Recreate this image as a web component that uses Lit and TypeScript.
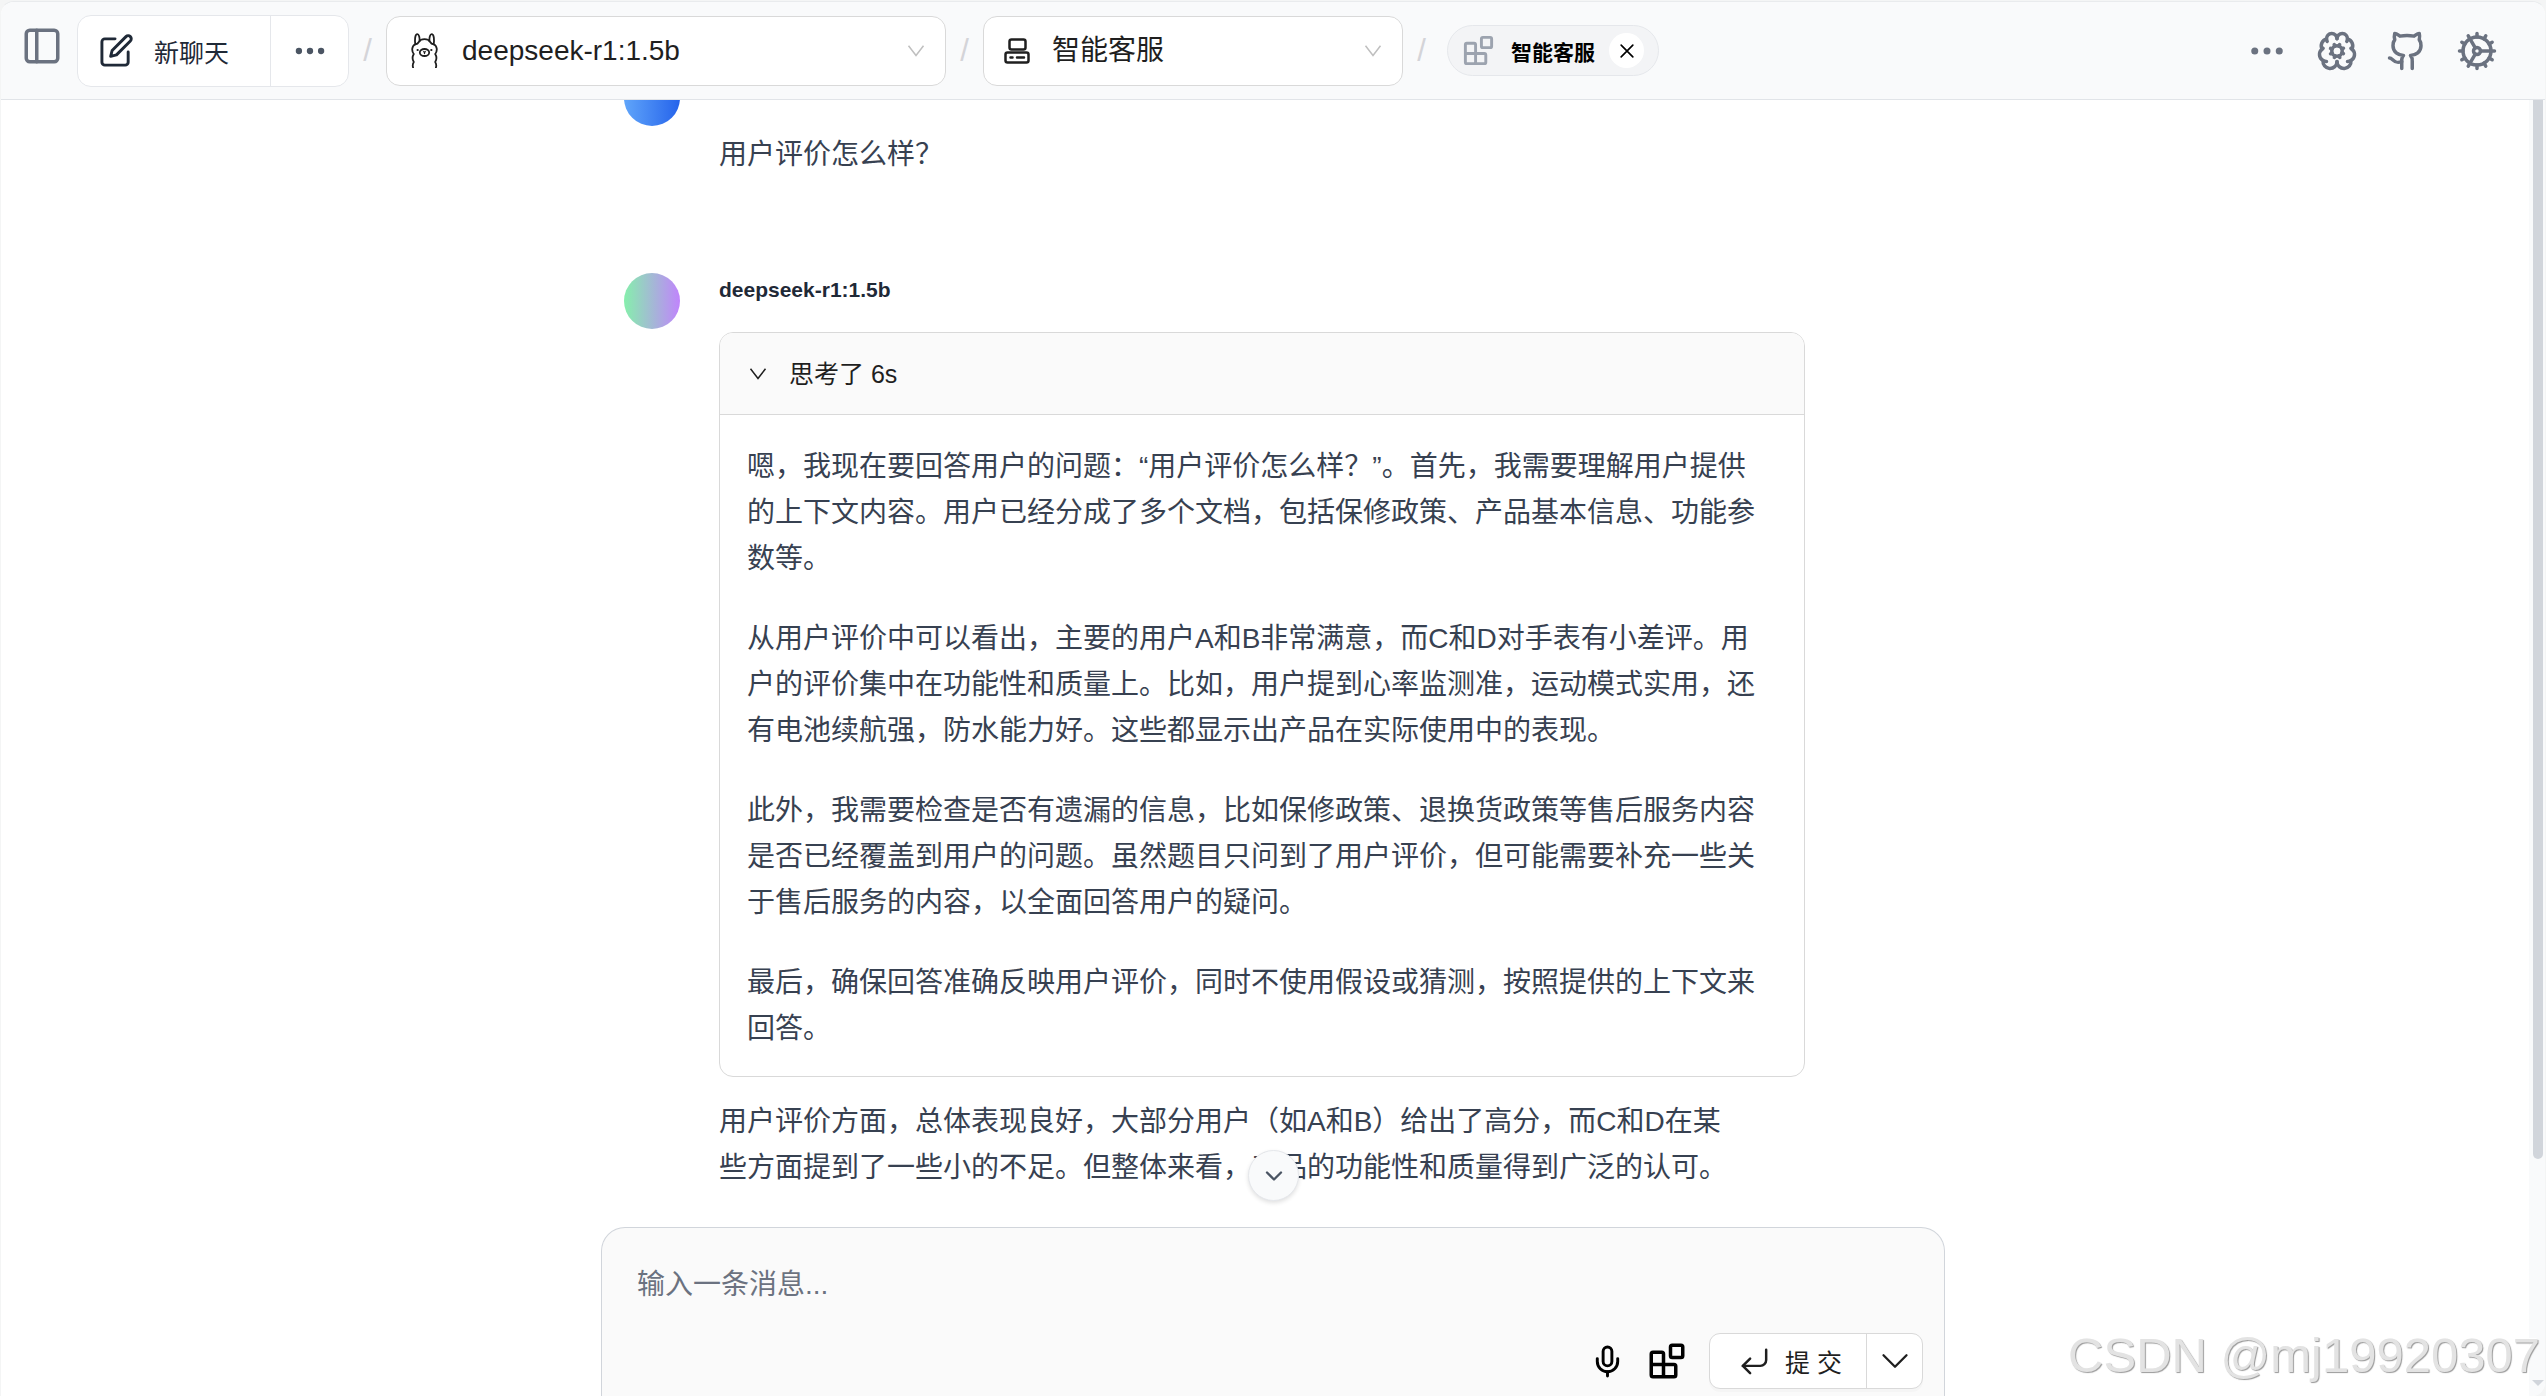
import { LitElement, html, css, svg } from "lit";
import { customElement, state } from "lit/decorators.js";

const icon = (cls: string, body: unknown, box = "0 0 24 24") =>
  html`<svg class="icon ${cls}" viewBox=${box} aria-hidden="true">${body}</svg>`;

const panelLeft = svg`<rect x="3" y="3" width="18" height="18" rx="2"/><path d="M9 3v18"/>`;
const squarePen = svg`<path d="M11 4H4a2 2 0 0 0-2 2v14a2 2 0 0 0 2 2h14a2 2 0 0 0 2-2v-7"/><path d="M18.5 2.5a2.12 2.12 0 0 1 3 3L12 15l-4 1 1-4Z"/>`;
const dots = svg`<circle cx="5" cy="12" r="2"/><circle cx="12" cy="12" r="2"/><circle cx="19" cy="12" r="2"/>`;
const chevron = svg`<path d="M2 5l10 13L22 5"/>`;
const chevronRound = svg`<path d="m6 9 6 6 6-6"/>`;
const close = svg`<path d="M5 5l14 14M19 5L5 19"/>`;
const blocks = svg`<rect x="14" y="3" width="7" height="7" rx="1"/><path d="M10 21V8a1 1 0 0 0-1-1H4a1 1 0 0 0-1 1v12a1 1 0 0 0 1 1h12a1 1 0 0 0 1-1v-5a1 1 0 0 0-1-1H3"/>`;
const mic = svg`<path d="M12 2a3 3 0 0 0-3 3v7a3 3 0 0 0 6 0V5a3 3 0 0 0-3-3Z"/><path d="M19 10v2a7 7 0 0 1-14 0v-2"/><path d="M12 19v3"/>`;
const enter = svg`<path d="m9 10-5 5 5 5"/><path d="M20 4v7a4 4 0 0 1-4 4H4"/>`;
const github = svg`<path d="M15 22v-4a4.8 4.8 0 0 0-1-3.5c3 0 6-2 6-5.5.08-1.25-.27-2.48-1-3.5.28-1.15.28-2.35 0-3.5 0 0-1 0-3 1.5-2.64-.5-5.36-.5-8 0C6 2 5 2 5 2c-.3 1.15-.3 2.35 0 3.5A5.403 5.403 0 0 0 4 9c0 3.5 3 5.5 6 5.5-.39.49-.68 1.05-.85 1.65-.17.6-.22 1.23-.15 1.85v4"/><path d="M9 18c-4.51 2-5-2-7-2"/>`;
const cog = svg`<path d="M12 20a8 8 0 1 0 0-16 8 8 0 0 0 0 16Z"/><path d="M12 14a2 2 0 1 0 0-4 2 2 0 0 0 0 4Z"/><path d="M12 2v2M12 22v-2M17 20.66l-1-1.73M11 10.27 7 3.34M20.66 17l-1.73-1M3.34 7l1.73 1M14 12h8M2 12h2M20.66 7l-1.73 1M3.34 17l1.73-1M17 3.34l-1 1.73M11 13.73l-4 6.93"/>`;
const brainCog = svg`<circle cx="12" cy="12" r="3"/>
  <path d="M12 5a3 3 0 1 0-5.997.125 4 4 0 0 0-2.526 5.77 4 4 0 0 0 .556 6.588A4 4 0 1 0 12 18"/>
  <path d="M12 5a3 3 0 1 1 5.997.125 4 4 0 0 1 2.526 5.77 4 4 0 0 1-.556 6.588A4 4 0 1 1 12 18"/>
  <path d="M6.003 5.125A3 3 0 0 0 6.401 6.5M17.599 6.5a3 3 0 0 0 .399-1.375M3.477 10.896a4 4 0 0 1 .585-.396M19.938 10.5a4 4 0 0 1 .585.396M6 18a4 4 0 0 1-1.967-.516M19.967 17.484A4 4 0 0 1 18 18"/>
  <path d="m15.7 10.4-.9.4M9.2 13.2l-.9.4M13.6 15.7l-.4-.9M10.8 9.2l-.4-.9M15.7 13.5l-.9-.4M9.2 10.9l-.9-.4M10.5 15.7l.4-.9M13.1 9.2l.4-.9"/>`;
const ollama = svg`<path d="M2.2 35c-.8-2.400-.6-4.200.6-6C1.300 26.500 1.200 23.500 2.800 21 .4 18 .6 13 4.300 11.300 6.500 11 7 10.500 7.800 9 9 7 11 6.200 13.500 6.200S18 7 19.200 9c.8 1.500 1.300 2 3.500 2.300 3.700 1.700 3.900 6.700 1.500 9.700 1.600 2.500 1.500 5.500 0 8 1.200 1.800 1.400 3.600.6 6"/>
  <path d="M4.300 11.300C3.600 7 4 1.500 6.100 1.200 8 1 8.800 4.500 8.600 7.800M22.700 11.300c.7-4.300.3-9.800-1.800-10.100C19 1 18.200 4.500 18.400 7.800"/>
  <ellipse cx="13.500" cy="19.500" rx="4.700" ry="3.500"/>
  <path d="M12.700 18.700l.8.600.8-.6M13.500 19.300v1.200" stroke-width="1.300"/>
  <path d="M6.600 17h.1M20.300 17h.1" stroke-width="2.200"/>`;
const assistant = svg`<rect x="5.500" y="1.500" width="16" height="10" rx="2"/><rect x="1.500" y="14.500" width="23" height="10" rx="2"/><path d="M6.500 19.500h2M13 19.500h7"/>`;

const THOUGHTS = [
  "嗯，我现在要回答用户的问题：“用户评价怎么样？”。首先，我需要理解用户提供的上下文内容。用户已经分成了多个文档，包括保修政策、产品基本信息、功能参数等。",
  "从用户评价中可以看出，主要的用户A和B非常满意，而C和D对手表有小差评。用户的评价集中在功能性和质量上。比如，用户提到心率监测准，运动模式实用，还有电池续航强，防水能力好。这些都显示出产品在实际使用中的表现。",
  "此外，我需要检查是否有遗漏的信息，比如保修政策、退换货政策等售后服务内容是否已经覆盖到用户的问题。虽然题目只问到了用户评价，但可能需要补充一些关于售后服务的内容，以全面回答用户的疑问。",
  "最后，确保回答准确反映用户评价，同时不使用假设或猜测，按照提供的上下文来回答。",
];
const ANSWER =
  "用户评价方面，总体表现良好，大部分用户（如A和B）给出了高分，而C和D在某些方面提到了一些小的不足。但整体来看，产品的功能性和质量得到广泛的认可。";

const base = css`
  * { box-sizing: border-box; }
  button, select, textarea { font: inherit; color: inherit; margin: 0; }
  button { padding: 0; border: 0; background: none; cursor: pointer; }
  .icon {
    display: block; flex: none; fill: none; stroke: currentColor;
    stroke-width: 2; stroke-linecap: round; stroke-linejoin: round;
  }
  .s42 { width: 42px; height: 42px; }
  .s35 { width: 35px; height: 35px; }
`;

@customElement("chat-header")
export class ChatHeader extends LitElement {
  static styles = [base, css`
    :host { display: block; flex: none; }
    .bar {
      display: flex; align-items: center; height: 98px; padding: 0 47px 0 20px;
      background: #f9fafb; border-bottom: 1px solid #e1e4e8; color: #6b7280;
    }
    .toggle { margin: 0 14px 10px 0; }
    .newchat {
      display: flex; height: 72px; border: 1px solid #e5e7eb; border-radius: 14px;
      background: #fff; color: #1f2937;
    }
    .new { display: flex; align-items: center; gap: 20px; padding: 0 41px 0 21px; font-size: 25px; }
    .more { width: 78px; border-left: 1px solid #e5e7eb; color: #4b5563; display: grid; place-items: center; }
    .filled { fill: currentColor; stroke: none; }
    .dots28 { width: 38px; height: 38px; }
    .slash { width: 37px; text-align: center; font-size: 31px; color: #d4d4d8; }
    .picker {
      display: flex; align-items: center; height: 70px; padding: 0 20px 0 24px;
      border: 1px solid #d9d9d9; border-radius: 14px; background: #fff; color: #1f1f1f; font-size: 28px;
    }
    .model { width: 560px; gap: 24px; }
    .bot { width: 420px; padding-left: 20px; gap: 22px; }
    .picker select { flex: 1; min-width: 0; appearance: none; border: 0; padding: 0; background: none; outline: none; }
    .ollama { width: 27px; height: 35px; stroke-width: 1.800; }
    .assistant { width: 26px; height: 26px; stroke-width: 2.500; }
    .arrow { width: 18px; height: 18px; color: #bfbfbf; stroke-linecap: butt; stroke-linejoin: miter; }
    .tag {
      display: flex; align-items: center; height: 51px; margin-left: 7px; padding: 0 14px 0 13px;
      border: 1px solid #e5e7eb; border-radius: 26px; background: #f3f4f6;
    }
    .tag .mark { color: #9ca3af; }
    .tag b { margin: 0 14px 0 15px; font-size: 21px; color: #000; }
    .close { width: 35px; height: 35px; border-radius: 50%; background: #fff; color: #000; display: grid; place-items: center; }
    .x { width: 20px; height: 20px; }
    .actions { display: flex; align-items: center; gap: 28px; margin-left: auto; }
    .actions a { color: inherit; }
  `];

  render() {
    return html`<header class="bar">
      <button class="toggle" aria-label="侧边栏">${icon("s42", panelLeft)}</button>
      <div class="newchat">
        <button class="new">${icon("s35", squarePen)}<span>新聊天</span></button>
        <button class="more" aria-label="更多">${icon("dots28 filled", dots)}</button>
      </div>
      <span class="slash">/</span>
      <label class="picker model">
        ${icon("ollama", ollama, "0 0 27 35")}
        <select aria-label="模型"><option>deepseek-r1:1.5b</option></select>
        ${icon("arrow", chevron)}
      </label>
      <span class="slash">/</span>
      <label class="picker bot">
        ${icon("assistant", assistant, "0 0 26 26")}
        <select aria-label="助手"><option>智能客服</option></select>
        ${icon("arrow", chevron)}
      </label>
      <span class="slash">/</span>
      <div class="tag">
        ${icon("s35 mark", blocks)}<b>智能客服</b>
        <button class="close" aria-label="移除">${icon("x", close)}</button>
      </div>
      <nav class="actions">
        <button aria-label="菜单">${icon("s42 filled", dots)}</button>
        <button aria-label="记忆">${icon("s42", brainCog)}</button>
        <a href="#github" aria-label="GitHub">${icon("s42", github)}</a>
        <a href="#settings" aria-label="设置">${icon("s42", cog)}</a>
      </nav>
    </header>`;
  }
}

@customElement("chat-messages")
export class ChatMessages extends LitElement {
  @state() private open = true;

  static styles = [base, css`
    :host {
      flex: 1; min-height: 0; display: flex; flex-direction: column; justify-content: flex-end;
      overflow: hidden; font-size: 28px; line-height: 46px; color: #374151;
    }
    .list {
      width: 100%; max-width: 1344px; margin: 0 auto; padding: 0 140px 36px 23px;
      display: flex; flex-direction: column; gap: 95px;
    }
    .message { display: grid; grid-template-columns: 56px minmax(0, 1fr); column-gap: 39px; }
    .avatar { width: 56px; height: 56px; border-radius: 50%; }
    .user .avatar { background: linear-gradient(to right, #60a5fa, #2563eb); }
    .reply .avatar { background: linear-gradient(to right, #86efac, #c084fc); }
    .user .body { padding-top: 62px; }
    p { margin: 0; max-width: 65ch; }
    .name { margin: 0 0 25px; font-size: 21px; line-height: 34px; color: #1f2937; }
    .thinking { border: 1px solid #d9d9d9; border-radius: 14px; overflow: hidden; margin-bottom: 22px; }
    .summary {
      display: flex; align-items: center; gap: 22px; width: 100%; height: 81px; padding: 0 29px;
      background: #fafafa; color: #1f1f1f; font-size: 25px; text-align: left;
    }
    .caret { width: 18px; height: 18px; stroke-linecap: butt; stroke-linejoin: miter; }
    .thoughts { display: grid; gap: 34px; padding: 29px 27px 24px; border-top: 1px solid #d9d9d9; }
  `];

  render() {
    return html`<div class="list">
      <article class="message user">
        <div class="avatar"></div>
        <div class="body"><p>用户评价怎么样？</p></div>
      </article>
      <article class="message reply">
        <div class="avatar"></div>
        <div>
          <h2 class="name">deepseek-r1:1.5b</h2>
          <section class="thinking">
            <button class="summary" aria-expanded=${this.open} @click=${() => (this.open = !this.open)}>
              ${icon("caret", chevron)}<span>思考了 6s</span>
            </button>
            ${this.open ? html`<div class="thoughts">${THOUGHTS.map((t) => html`<p>${t}</p>`)}</div>` : ""}
          </section>
          <p>${ANSWER}</p>
        </div>
      </article>
    </div>`;
  }
}

@customElement("chat-composer")
export class ChatComposer extends LitElement {
  static styles = [base, css`
    :host { display: block; flex: none; position: relative; width: 100%; max-width: 1344px; margin: 0 auto; }
    .down {
      position: absolute; bottom: calc(100% + 26px); left: calc(50% - 25px); width: 51px; height: 51px;
      display: grid; place-items: center; border: 1px solid #e5e7eb; border-radius: 50%;
      background: #f9fafb; color: #4b5563; box-shadow: 0 2px 4px rgba(0, 0, 0, 0.12);
    }
    .s28 { width: 28px; height: 28px; }
    .box {
      padding: 34px 21px 7px; border: 1px solid #d1d5db; border-bottom: 0;
      border-radius: 24px 24px 0 0; background: #fafafa;
    }
    textarea {
      display: block; width: 100%; height: 46px; padding: 0 14px; border: 0; outline: none; resize: none;
      overflow: hidden; background: none; font-size: 28px; line-height: 46px; color: #374151;
    }
    textarea::placeholder { color: #6b7280; opacity: 1; }
    .tools { display: flex; justify-content: flex-end; align-items: center; gap: 21px; margin-top: 25px; color: #000; }
    .submit {
      display: flex; height: 56px; border: 1px solid #d9d9d9; border-radius: 11px; background: #fff;
      color: #1f1f1f; box-shadow: 0 3px 0 rgba(0, 0, 0, 0.02);
    }
    .send { display: flex; align-items: center; gap: 13px; padding: 0 24px 0 27px; font-size: 25px; }
    .thin { stroke-width: 1.700; }
    .options { width: 56px; border-left: 1px solid #d9d9d9; display: grid; place-items: center; }
    .wide { width: 46px; height: 46px; stroke-width: 1.200; }
  `];

  render() {
    return html`
      <button class="down" aria-label="滚动到底部">${icon("s28", chevronRound)}</button>
      <form class="box" @submit=${(e: Event) => e.preventDefault()}>
        <textarea aria-label="消息" placeholder="输入一条消息..."></textarea>
        <div class="tools">
          <button type="button" aria-label="语音">${icon("s35", mic)}</button>
          <button type="button" aria-label="知识库">${icon("s42", blocks)}</button>
          <div class="submit">
            <button class="send">${icon("s35 thin", enter)}<span>提 交</span></button>
            <button class="options" type="button" aria-label="发送选项">${icon("wide", chevronRound)}</button>
          </div>
        </div>
      </form>`;
  }
}

@customElement("app-root")
export class AppRoot extends LitElement {
  static styles = [base, css`
    :host {
      display: block; height: 100vh; padding-top: 1px; box-sizing: border-box; overflow: hidden; background: #f4f5f5;
      font-family: "Liberation Sans", "Noto Sans CJK SC", sans-serif;
    }
    .shell {
      position: relative; display: flex; flex-direction: column; height: 100%; overflow: hidden;
      border: 1px solid #f4f5f5; border-top-color: #e9ebed; border-bottom: 0;
      border-radius: 14px 14px 14px 0; background: #fff;
    }
    .track { position: absolute; top: 98px; right: -1px; bottom: 0; width: 17px; padding: 0 3px 0 4px; background: #f9fafb; }
    .thumb { height: 81.700%; border-radius: 0 0 5px 5px; background: #d1d5db; }
    .step {
      position: absolute; bottom: 10px; left: 3px; width: 12px; height: 6px;
      background: #d1d5db; clip-path: polygon(0 0, 100% 0, 50% 100%);
    }
    .watermark {
      position: absolute; right: 5px; bottom: 13px; font-size: 49px; line-height: 56px; color: #e3e3e3;
      text-shadow: 1px 1px 1px #999, -1px -1px 0 #fff; pointer-events: none; white-space: nowrap;
    }
  `];

  render() {
    return html`<main class="shell" lang="zh-CN">
      <chat-header></chat-header>
      <chat-messages></chat-messages>
      <chat-composer></chat-composer>
      <div class="track"><div class="thumb"></div><div class="step"></div></div>
      <div class="watermark">CSDN @mj19920307</div>
    </main>`;
  }
}
